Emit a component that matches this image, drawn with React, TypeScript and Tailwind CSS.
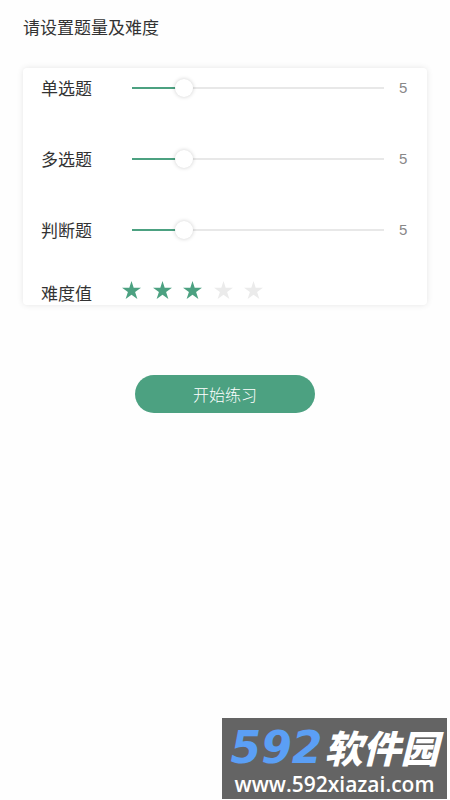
import { useState } from "react";

type QuestionSliderProps = {
  id: string;
  label: string;
  value: number;
  onChange: (value: number) => void;
};

const MAX_COUNT = 24;

const questionTypes = [
  { id: "single", label: "单选题" },
  { id: "multiple", label: "多选题" },
  { id: "judge", label: "判断题" },
];

function QuestionSlider({ id, label, value, onChange }: QuestionSliderProps) {
  return (
    <div className="flex h-10 items-center pl-[18px] pr-4">
      <label htmlFor={id} className="w-[91px] shrink-0 text-[17px] leading-6">
        {label}
      </label>
      <div className="relative h-0.5 flex-1 bg-[#e8e8e8]">
        <div
          className="h-full bg-[#4ca181]"
          style={{ width: `${(value / MAX_COUNT) * 100}%` }}
        />
        {/* wider than the track by half a thumb on each side */}
        <input
          id={id}
          type="range"
          min={0}
          max={MAX_COUNT}
          value={value}
          onChange={(e) => onChange(Number(e.target.value))}
          className="absolute -inset-x-[9px] -top-2 h-[18px] cursor-pointer appearance-none bg-transparent [&::-webkit-slider-thumb]:size-[18px] [&::-webkit-slider-thumb]:appearance-none [&::-webkit-slider-thumb]:rounded-full [&::-webkit-slider-thumb]:bg-white [&::-webkit-slider-thumb]:shadow-[0_0_4px_rgba(0,0,0,0.2)]"
        />
      </div>
      <output
        htmlFor={id}
        className="ml-[15px] w-3 font-['Liberation_Sans',sans-serif] text-[15px] leading-6 text-[#888888]"
      >
        {value}
      </output>
    </div>
  );
}

function DifficultyRating() {
  const [level, setLevel] = useState(3);

  return (
    <div
      role="radiogroup"
      aria-labelledby="difficulty"
      className="flex h-6 items-start pl-[18px]"
    >
      <span id="difficulty" className="w-[81px] shrink-0 text-[17px] leading-6">
        难度值
      </span>
      <div className="flex w-[141px] justify-between">
        {[1, 2, 3, 4, 5].map((n) => (
          <label key={n} className="relative cursor-pointer">
            <input
              type="radio"
              name="difficulty"
              aria-label={`${n}星`}
              checked={level === n}
              onChange={() => setLevel(n)}
              className="absolute inset-0 size-full appearance-none"
            />
            <svg
              viewBox="0 0 20 19"
              className={`block h-[18px] w-[19px] ${
                n <= level ? "fill-[#4ca181]" : "fill-[#ebebeb]"
              }`}
            >
              <path d="M10 0l2.3 7.2H20l-6.2 4.5 2.4 7.3L10 14.5 3.8 19l2.4-7.3L0 7.2h7.7z" />
            </svg>
          </label>
        ))}
      </div>
    </div>
  );
}

function Watermark() {
  return (
    <div className="fixed bottom-px right-[3px] flex h-[81px] w-[225px] flex-col items-center bg-[#646464] pt-2 text-white">
      <div className="flex h-[46px] items-baseline gap-0.5 whitespace-nowrap">
        <span className="font-['DejaVu_Sans',sans-serif] text-[44px] font-bold italic leading-none text-[#5b9ff5]">
          592
        </span>
        <span className="text-[38px] font-black italic leading-none">
          软件园
        </span>
      </div>
      <span className="font-['Open_Sans',sans-serif] text-[21px] font-semibold leading-6">
        www.592xiazai.com
      </span>
    </div>
  );
}

export default function App() {
  const [counts, setCounts] = useState<Record<string, number>>({
    single: 5,
    multiple: 5,
    judge: 5,
  });

  return (
    <main className="min-h-screen bg-[#fefefe] font-['Noto_Sans_CJK_SC',sans-serif] text-[#333333]">
      <h1 className="px-[23px] pt-[15px] text-[17px] leading-6">
        请设置题量及难度
      </h1>
      <section className="mx-[23px] mt-[29px] flex flex-col gap-[31px] rounded-sm bg-white shadow-[0_0_6px_rgba(0,0,0,0.1)]">
        {questionTypes.map(({ id, label }) => (
          <QuestionSlider
            key={id}
            id={id}
            label={label}
            value={counts[id]}
            onChange={(value) => setCounts({ ...counts, [id]: value })}
          />
        ))}
        <DifficultyRating />
      </section>
      <div className="mt-[70px] flex justify-center">
        <button
          type="button"
          className="h-[38px] w-[180px] cursor-pointer rounded-full bg-[#4ca181] text-base font-light text-white"
        >
          开始练习
        </button>
      </div>
      <Watermark />
    </main>
  );
}
